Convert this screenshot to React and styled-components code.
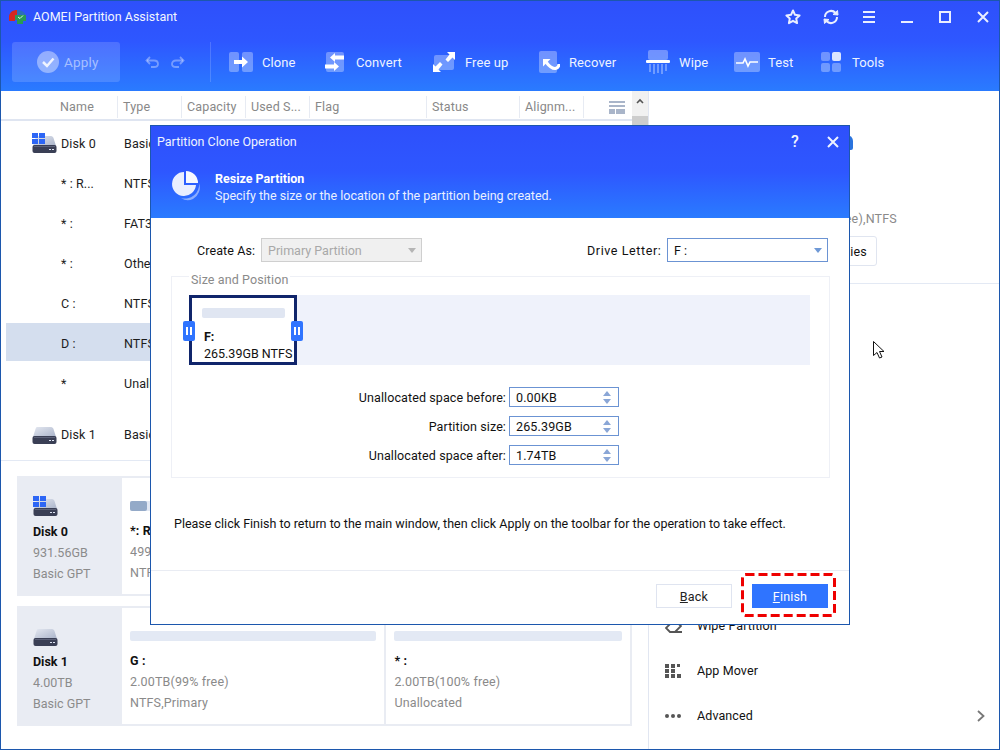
import React from "react";
import styled, { createGlobalStyle } from "styled-components";

const Global = createGlobalStyle`
  html, body { margin: 0; padding: 0; background: #fff; }
  * { box-sizing: border-box; }
  svg { display: block; flex: none; }
`;

const Win = styled.div`
  position: relative; width: 1000px; height: 750px; overflow: hidden;
  border: 1px solid #1c57ad; background: #fff; display: flex; flex-direction: column;
  font-family: Roboto, "Liberation Sans", sans-serif; font-size: 12.5px; color: #111;
`;
const Header = styled.header`
  height: 90px; flex: none; background: linear-gradient(180deg, #2e50fb 0%, #2e57ff 45%, #2a7bff 100%);
  color: #fff;
`;
const TitleBar = styled.div`
  height: 31px; display: flex; align-items: center; padding: 0 7px;
`;
const AppTitle = styled.div`
  margin-left: 6px; font-size: 12.5px; color: #f2f5ff;
`;
const WinControls = styled.div`
  margin-left: auto; display: flex; gap: 20px;
`;
const Toolbar = styled.div`
  display: flex; align-items: center; height: 40px; margin-top: 10px; padding-left: 11px;
`;
const ApplyBtn = styled.div`
  width: 108px; height: 40px; border-radius: 3px; background: rgba(255,255,255,.15);
  display: flex; align-items: center; padding-left: 25px; gap: 5px;
  color: rgba(255,255,255,.52); font-size: 13.5px; letter-spacing: .2px;
`;
const History = styled.div`
  display: flex; gap: 12px; margin-left: 25px; width: 65px;
`;
const ToolSep = styled.div`
  width: 1px; height: 40px; background: rgba(255,255,255,.16); margin-right: 18px;
`;
const Tool = styled.div`
  width: ${p => p.$w}px; display: flex; align-items: center; flex: none;
  color: #eef3ff; font-size: 13px; letter-spacing: .1px;
`;
const ToolIcon = styled.div`
  width: ${p => p.$w}px; height: 24px; flex: none; display: flex; align-items: center;
`;

const Main = styled.div`flex: 1; display: flex; min-height: 0;`;
const Left = styled.section`
  width: 648px; flex: none; border-right: 1px solid #e1e6f1; display: flex; flex-direction: column;
`;
const TableArea = styled.div`
  height: 370px; flex: none; border-bottom: 1px solid #e3e9f4; display: flex;
`;
const Table = styled.div`flex: 1; min-width: 0;`;
const Scrollbar = styled.div`
  width: 16px; flex: none; background: #f4f4f4; display: flex; flex-direction: column; align-items: center;
`;
const ScrollUp = styled.div`
  height: 25px; width: 100%; display: flex; align-items: center; justify-content: center; padding-bottom: 6px; background: #f1f1f1;
`;
const ScrollThumb = styled.div`width: 100%; height: 120px; background: #cdcdcd;`;
const HeadRow = styled.div`
  height: 30px; padding-top: 4px; display: grid; grid-template-columns: 117px 64px 64px 64px 117px 93px 64px 1fr;
  align-items: center; border-bottom: 2px solid #dfe5f1; color: #888; font-size: 12.5px; letter-spacing: .15px;
`;
const HeadCell = styled.div`
  height: 22px; line-height: 22px; padding-left: ${p => p.$first ? 59 : 5}px; white-space: nowrap; overflow: hidden;
  border-right: 1px solid #e7ebf3;
`;
const ColumnsIcon = styled.div`padding-left: 25px; display: flex; align-items: center;`;
const Row = styled.div`
  height: 38px; padding-top: 2px; margin: ${p => p.$mt || 0}px 0 2px 5px; display: grid; grid-template-columns: 118px 1fr; align-items: center;
  background: ${p => p.$sel ? "#d4deee" : "transparent"}; letter-spacing: .1px; color: #1c1c1c;
`;
const NameCell = styled.div`
  display: flex; align-items: center; gap: 4px; padding-left: ${p => p.$disk ? 26 : 55}px;
`;
const Rows = styled.div`padding-top: 2px;`;

const Cards = styled.div`padding: 15px 0 0 16px; display: flex; flex-direction: column; gap: 10px;`;
const Card = styled.div`
  width: 615px; height: 120px; background: #e9ecf3; padding: 2px 2px 2px 0; display: flex;
`;
const CardDisk = styled.div`
  width: 105px; flex: none; padding: 18px 0 0 16px; color: #8b8b8b; line-height: 21px;
`;
const DiskName = styled.div`font-weight: 700; color: #111; margin-top: 5px;`;
const Part = styled.div`
  flex: ${p => p.$grow}; min-width: 0; background: #fff; padding: 23px 8px 0; margin-right: 2px; white-space: nowrap;
  line-height: 21px; color: #8a8a8a; letter-spacing: .15px; overflow: hidden;
  &:last-child { margin-right: 0; }
`;
const Bar = styled.div`height: 10px; background: #e3e9f4; border-radius: 2px; margin-bottom: 10px;`;
const BarFill = styled.div`height: 100%; background: #94aac8; border-radius: 2px;`;
const PartName = styled.div`font-weight: 700; color: #111; line-height: 20px;`;

const Right = styled.section`flex: 1; display: flex; flex-direction: column; min-width: 0;`;
const RightTop = styled.div`
  height: 193px; flex: none; border-bottom: 1px solid #e3e9f4; padding-top: 44px; display: flex; flex-direction: column;
`;
const BlueTab = styled.div`
  width: 30px; height: 15px; margin-left: 174px; border-radius: 10px 6px 2px 2px; background: #2a74de;
`;
const Info = styled.div`
  margin-top: 60px; padding-right: 102px; text-align: right; color: #8a8a8a; letter-spacing: .2px; line-height: 18px;
`;
const PropBtn = styled.div`
  width: 110px; height: 30px; margin: 8px 0 0 118px; border: 1px solid #e0e5f0; border-radius: 3px;
  display: flex; align-items: center; justify-content: flex-end; padding-right: 9px; letter-spacing: .2px;
`;
const Ops = styled.div`margin-top: auto; padding: 0 0 11px 16px; display: flex; flex-direction: column;`;
const Op = styled.div`
  height: 45px; display: flex; align-items: center; gap: 15px; letter-spacing: .1px;
`;
const OpIcon = styled.div`width: 17px; height: 17px; flex: none; display: flex; align-items: center;`;
const Chevron = styled.div`margin-left: auto; margin-right: 14px; display: flex;`;

const Cursor = styled.svg`position: absolute; left: 871px; top: 339px;`;

const Dialog = styled.div`
  position: absolute; left: 149px; top: 124px; width: 700px; height: 500px; background: #fff;
  border: 1px solid #1c57ad; display: flex; flex-direction: column; font-size: 12.5px;
`;
const DlgHead = styled.div`
  height: 92px; flex: none; color: #fff; background: linear-gradient(180deg, #2e50fb 0%, #2e57ff 50%, #2a7bff 100%);
`;
const DlgTitleBar = styled.div`
  height: 31px; display: flex; align-items: center; padding: 0 10px 0 6px; color: #eef3ff;
`;
const DlgBtns = styled.div`margin-left: auto; display: flex; align-items: center; gap: 24px;`;
const Help = styled.span`font-size: 16px; font-weight: 500; width: 16px; text-align: center; color: #f1f4ff;`;
const Banner = styled.div`
  display: flex; align-items: flex-start; padding: 12px 0 0 20px; gap: 13px;
`;
const BannerIcon = styled.svg`margin-top: 2px;`;
const BannerText = styled.div`line-height: 17px; padding-top: 1px; color: #eaf0ff;`;
const BannerTitle = styled.div`font-weight: 700; color: #fff;`;

const TopFields = styled.div`
  display: flex; justify-content: space-between; align-items: center; padding: 20px 21px 0 46px; height: 44px;
`;
const FieldGroup = styled.div`display: flex; align-items: center; gap: 6px;`;
const FieldLabel = styled.div`
  width: ${p => p.$w}px; text-align: right; white-space: nowrap; letter-spacing: ${p => p.$ls || .1}px;
`;
const Select = styled.div`
  width: ${p => p.$w}px; height: 24px; display: flex; align-items: center; padding: 0 5px 0 6px;
  border: 1px solid ${p => p.$disabled ? "#cfcfcf" : "#6b93d3"};
  background: ${p => p.$disabled ? "#f0f0f0" : "#fff"};
  color: ${p => p.$disabled ? "#a8a8a8" : "#111"};
`;
const Caret = styled.div`
  margin-left: auto; width: 0; height: 0; border-left: 4.500px solid transparent; border-right: 4.500px solid transparent;
  border-top: 5px solid ${p => p.$disabled ? "#b5b5b5" : "#6f99d6"};
`;
const Group = styled.div`
  position: relative; height: 202px; margin: 14px 19px 0 20px; border: 1px solid #eef0f6; padding: 18px 19px 0 17px;
`;
const Legend = styled.div`
  position: absolute; left: 17px; top: -4px; padding: 0 2px; background: #fff; color: #8a8a8a; line-height: 14px; letter-spacing: .1px;
`;
const Track = styled.div`height: 70px; background: #eff2fb;`;
const PartBox = styled.div`
  position: relative; width: 108px; height: 70px; background: #fff; border: 3px solid #10256b; padding: 10px 0 0 12px;
  white-space: nowrap; line-height: 17px;
`;
const InnerBar = styled.div`height: 10px; background: #e0e6f2; border-radius: 2px; margin: 0 0 10px -2px; width: 83px;`;
const BoxName = styled.div`font-weight: 700;`;
const Handle = styled.div`
  position: absolute; top: 23px; ${p => p.$side}: -9px; width: 12px; height: 20px; border-radius: 2px; background: #2f74ff;
  display: flex; align-items: center; justify-content: center; gap: 2px;
  &::before, &::after { content: ""; width: 2px; height: 8px; background: #fff; }
`;
const Sizes = styled.div`
  margin-top: 22px; display: grid; grid-template-columns: 317px 110px; column-gap: 3px; row-gap: 9px; align-items: center;
`;
const SizeLabel = styled.div`text-align: right; letter-spacing: .1px;`;
const Spin = styled.div`
  height: 20px; border: 1px solid #6b93d3; display: flex; align-items: center; padding: 0 6px; letter-spacing: .15px;
`;
const SpinArrows = styled.div`margin-left: auto; margin-right: 1px; display: flex; flex-direction: column; gap: 3px;`;
const SpinUp = styled.div`
  width: 0; height: 0; border-left: 4px solid transparent; border-right: 4px solid transparent; border-bottom: 5px solid #8aa6d6;
`;
const SpinDown = styled(SpinUp)`border-bottom: 0; border-top: 5px solid #8aa6d6;`;
const Note = styled.div`margin: 38px 0 0 23px; line-height: 16px;`;
const Footer = styled.div`
  margin-top: auto; height: 54px; flex: none; border-top: 1px solid #e9ecf3; display: flex; justify-content: flex-end;
  gap: 20px; padding: 13px 21px 0 0;
`;
const Btn = styled.div`
  position: relative; width: 76px; height: 24px; display: flex; align-items: center; justify-content: center; letter-spacing: .2px;
  border: 1px solid ${p => p.$primary ? "#2f74ff" : "#dfe4f0"};
  background: ${p => p.$primary ? "#2f74ff" : "#fff"}; color: ${p => p.$primary ? "#fff" : "#222"};
`;
const Dash = styled.svg`position: absolute; left: -12px; top: -12px;`;
const Ul = styled.span`text-decoration: underline;`;

const WinIco = ({ children, w = 18, h = 18, vb = "0 0 18 18" }) => (
  <svg width={w} height={h} viewBox={vb} fill="none" stroke="#e9eeff" strokeWidth="2">{children}</svg>
);

const Logo = () => (
  <svg width="19" height="16" viewBox="0 0 19 16">
    <path d="M1 7 C2 3 5 1 9 1 L9 7 L7 8 L7 12 L1 12Z" fill="#d5281f" />
    <path d="M9 1 C13 1 17 3 18 7 L12 7 L9 5Z" fill="#2a6fb8" />
    <path d="M7 6 L18 6 L18 12 L15 12 L15 15 L9 15 L9 11 L7 11Z" fill="#2a9a55" />
    <path d="M10 8 L12 9.500 L15 6.500" stroke="#d9ffe6" strokeWidth="1" fill="none" />
  </svg>
);

const DiskIcon = ({ win }) => (
  <svg width="25" height="20" viewBox="0 0 25 20">
    <defs>
      <linearGradient id="dg" x1="0" y1="0" x2="1" y2="1">
        <stop offset="0" stopColor="#e4e8f1" />
        <stop offset="1" stopColor="#a9b3c9" />
      </linearGradient>
    </defs>
    <path d="M5 3 C5 3 6 3 7 3 L19 3 C20.500 3 21 4 21.500 5 L24 13 L1 13 L3.500 5 C4 4 4 3 5 3Z" fill="url(#dg)" />
    <rect x="0.500" y="12" width="24" height="8" rx="2" fill="#3a3f55" />
    <rect x="2" y="13" width="21" height="1" fill="#5b6178" />
    <rect x="17" y="16" width="2" height="1" fill="#dfe6f5" />
    <rect x="20" y="16" width="2" height="1" fill="#dfe6f5" />
    {win && (
      <g fill="#2d66f5">
        <rect x="0" y="0" width="6" height="5" />
        <rect x="7" y="0" width="6" height="5" />
        <rect x="0" y="6" width="6" height="5" />
        <rect x="7" y="6" width="6" height="5" />
      </g>
    )}
  </svg>
);

const W = "#fff";
const T = "rgba(255,255,255,.32)";

const tools = [
  { name: "Clone", w: 96, iw: 33, icon: (
    <svg width="24" height="20" viewBox="0 0 24 20">
      <rect x="0" y="0" width="10" height="20" rx="2" fill={T} />
      <rect x="13" y="0" width="11" height="20" rx="2" fill={T} />
      <path d="M5 8 H13 V4.500 L19 10 L13 15.500 V12 H5Z" fill={W} />
    </svg>) },
  { name: "Convert", w: 108, iw: 31, icon: (
    <svg width="20" height="22" viewBox="0 0 20 22">
      <rect x="1" y="1" width="18" height="20" rx="2" fill={T} />
      <path d="M19 4.500 H10 V2 L5 6.500 L10 11 V8.500 H19Z" fill={W} />
      <path d="M0 13.500 H9 V11 L14 15.500 L9 20 V17.500 H0Z" fill={W} />
    </svg>) },
  { name: "Free up", w: 106, iw: 32, icon: (
    <svg width="22" height="20" viewBox="0 0 22 20">
      <rect x="1" y="3" width="20" height="15" rx="2" fill={T} />
      <path d="M22 0 V8 L19.500 5.500 L15 10 L12.500 7.500 L16.500 2.500 L14 0Z" fill={W} />
      <path d="M0 20 V12 L2.500 14.500 L7 10 L9.500 12.500 L5.500 17.500 L8 20Z" fill={W} />
    </svg>) },
  { name: "Recover", w: 107, iw: 30, icon: (
    <svg width="21" height="22" viewBox="0 0 21 22">
      <rect x="0" y="0" width="18" height="22" rx="2" fill={T} />
      <path d="M4 8 H11.500 L4 15.500Z" fill={W} />
      <path d="M7 11 C10 15 13 18 16.500 17.500 C18.500 17 20 15.500 20 13" stroke={W} strokeWidth="3" fill="none" />
    </svg>) },
  { name: "Wipe", w: 88, iw: 33, icon: (
    <svg width="24" height="24" viewBox="0 0 24 24">
      <rect x="2" y="0" width="20" height="10" rx="2" fill={T} />
      <rect x="0" y="10" width="24" height="3" rx="1" fill={W} />
      <g fill={T}>
        <rect x="3" y="14" width="2" height="8" /><rect x="7" y="14" width="2" height="10" /><rect x="11" y="14" width="2" height="9" /><rect x="15" y="14" width="2" height="10" /><rect x="19" y="14" width="2" height="7" />
      </g>
    </svg>) },
  { name: "Test", w: 87, iw: 34, icon: (
    <svg width="26" height="20" viewBox="0 0 26 20">
      <rect x="0" y="0" width="26" height="20" rx="2" fill={T} />
      <path d="M2 11 H9 L11 7 L14 14 L16 10 H24" stroke={W} strokeWidth="1.600" fill="none" />
    </svg>) },
  { name: "Tools", w: 90, iw: 31, icon: (
    <svg width="20" height="20" viewBox="0 0 20 20">
      <rect x="0" y="0" width="9" height="9" rx="2" fill={T} />
      <rect x="11" y="0" width="9" height="9" rx="2" fill="#dbe5ff" />
      <rect x="0" y="11" width="9" height="9" rx="2" fill={T} />
      <rect x="11" y="11" width="9" height="9" rx="2" fill={T} />
    </svg>) },
];

const diskRows = [
  { name: "Disk 0", type: "Basic GPT", win: true, disk: true },
  { name: "* : R...", type: "NTFS" },
  { name: "* :", type: "FAT32" },
  { name: "* :", type: "Other" },
  { name: "C :", type: "NTFS" },
  { name: "D :", type: "NTFS", sel: true },
  { name: "*", type: "Unallocated" },
  { name: "Disk 1", type: "Basic GPT", disk: true, mt: 13 },
];

const sizes = [
  ["Unallocated space before:", "0.00KB"],
  ["Partition size:", "265.39GB"],
  ["Unallocated space after:", "1.74TB"],
];

const heads = ["Name", "Type", "Capacity", "Used S...", "Flag", "Status", "Alignm..."];

export default function App() {
  return (
    <Win>
      <Global />
      <Header>
        <TitleBar>
          <Logo />
          <AppTitle>AOMEI Partition Assistant</AppTitle>
          <WinControls>
            <WinIco><path d="M9 2.500 L11 6.800 L15.600 7.400 L12.200 10.500 L13.100 15.100 L9 12.800 L4.900 15.100 L5.800 10.500 L2.400 7.400 L7 6.800Z" strokeLinejoin="round" /></WinIco>
            <WinIco>
              <path d="M3 9 A6 6 0 0 1 13.500 5" />
              <path d="M15 9 A6 6 0 0 1 4.500 13" />
              <path d="M11 6.500 L16 7 L15.500 2.500Z" fill="#e9eeff" strokeWidth="1" />
              <path d="M7 11.500 L2 11 L2.500 15.500Z" fill="#e9eeff" strokeWidth="1" />
            </WinIco>
            <WinIco><path d="M3 4 H15 M3 9 H15 M3 14 H15" /></WinIco>
            <WinIco><path d="M3 14 H15" /></WinIco>
            <WinIco><rect x="4" y="4" width="10" height="10" /></WinIco>
            <WinIco><path d="M4 4 L14 14 M14 4 L4 14" /></WinIco>
          </WinControls>
        </TitleBar>
        <Toolbar>
          <ApplyBtn>
            <svg width="22" height="22" viewBox="0 0 22 22">
              <circle cx="11" cy="11" r="11" fill="rgba(255,255,255,.4)" />
              <path d="M6 11 L10 15 L16.500 7.500" stroke="#fff" strokeWidth="2.500" fill="none" opacity=".85" />
            </svg>
            Apply
          </ApplyBtn>
          <History>
            <svg width="14" height="12" viewBox="0 0 14 12" fill="none" stroke="rgba(255,255,255,.35)" strokeWidth="1.800">
              <path d="M5 1 L1.500 4.500 L5 8" /><path d="M2 4.500 H9 C11.500 4.500 13 6 13 8 C13 10 11.500 11 9 11 H6" />
            </svg>
            <svg width="14" height="12" viewBox="0 0 14 12" fill="none" stroke="rgba(255,255,255,.35)" strokeWidth="1.800">
              <path d="M9 1 L12.500 4.500 L9 8" /><path d="M12 4.500 H5 C2.500 4.500 1 6 1 8 C1 10 2.500 11 5 11 H8" />
            </svg>
          </History>
          <ToolSep />
          {tools.map(t => (
            <Tool key={t.name} $w={t.w}>
              <ToolIcon $w={t.iw}>{t.icon}</ToolIcon>
              {t.name}
            </Tool>
          ))}
        </Toolbar>
      </Header>
      <Main>
        <Left>
          <TableArea>
            <Table>
              <HeadRow>
                {heads.map((h, i) => <HeadCell key={h} $first={i === 0}>{h}</HeadCell>)}
                <ColumnsIcon>
                  <svg width="16" height="13" viewBox="0 0 16 13">
                    <g fill="#a9b5c9">
                      <rect x="0" y="0" width="16" height="2" />
                      <rect x="0" y="4" width="16" height="2" />
                      <rect x="0" y="8" width="6" height="5" />
                      <rect x="7" y="8" width="9" height="5" />
                    </g>
                  </svg>
                </ColumnsIcon>
              </HeadRow>
              <Rows>
                {diskRows.map((r, i) => (
                  <Row key={i} $sel={r.sel} $mt={r.mt}>
                    <NameCell $disk={r.disk}>{r.disk && <DiskIcon win={r.win} />}{r.name}</NameCell>
                    <div>{r.type}</div>
                  </Row>
                ))}
              </Rows>
            </Table>
            <Scrollbar>
              <ScrollUp>
                <svg width="8" height="6" viewBox="0 0 8 6"><path d="M1 5 L4 2 L7 5" stroke="#555" strokeWidth="1.600" fill="none" /></svg>
              </ScrollUp>
              <ScrollThumb />
            </Scrollbar>
          </TableArea>
          <Cards>
            <Card>
              <CardDisk>
                <DiskIcon win />
                <DiskName>Disk 0</DiskName>
                <div>931.56GB</div>
                <div>Basic GPT</div>
              </CardDisk>
              <Part $grow={1}>
                <Bar><BarFill style={{ width: "17px" }} /></Bar>
                <PartName>*: R</PartName>
                <div>499.00MB</div>
                <div>NTFS,Primary</div>
              </Part>
            </Card>
            <Card>
              <CardDisk>
                <DiskIcon />
                <DiskName>Disk 1</DiskName>
                <div>4.00TB</div>
                <div>Basic GPT</div>
              </CardDisk>
              <Part $grow={263}>
                <Bar />
                <PartName>G :</PartName>
                <div>2.00TB(99% free)</div>
                <div>NTFS,Primary</div>
              </Part>
              <Part $grow={243}>
                <Bar />
                <PartName>* :</PartName>
                <div>2.00TB(100% free)</div>
                <div>Unallocated</div>
              </Part>
            </Card>
          </Cards>
        </Left>
        <Right>
          <RightTop>
            <BlueTab />
            <Info>465.76GB(52% free),NTFS</Info>
            <PropBtn>Properties</PropBtn>
          </RightTop>
          <Ops>
            <Op>
              <OpIcon>
                <svg width="17" height="14" viewBox="0 0 17 14" fill="none" stroke="#555" strokeWidth="1.800"><path d="M5 13 L1 9 L9 1 L16 7 L10 13 Z M5 13 H17" /></svg>
              </OpIcon>
              Wipe Partition
            </Op>
            <Op>
              <OpIcon>
                <svg width="16" height="14" viewBox="0 0 16 14" fill="#555">
                  <rect x="0" y="0" width="4" height="4" /><rect x="6" y="0" width="4" height="4" /><rect x="12" y="0" width="3" height="3" />
                  <rect x="0" y="5" width="4" height="4" /><rect x="6" y="5" width="4" height="4" />
                  <rect x="0" y="10" width="4" height="4" /><rect x="6" y="10" width="4" height="4" /><rect x="12" y="10" width="4" height="4" />
                </svg>
              </OpIcon>
              App Mover
            </Op>
            <Op>
              <OpIcon>
                <svg width="16" height="4" viewBox="0 0 16 4" fill="#555"><circle cx="2" cy="2" r="2" /><circle cx="8" cy="2" r="2" /><circle cx="14" cy="2" r="2" /></svg>
              </OpIcon>
              Advanced
              <Chevron>
                <svg width="8" height="12" viewBox="0 0 8 12"><path d="M1 1 L6.500 6 L1 11" stroke="#777" strokeWidth="1.800" fill="none" /></svg>
              </Chevron>
            </Op>
          </Ops>
        </Right>
      </Main>

      <Cursor width="14" height="20" viewBox="0 0 14 20">
        <path d="M1.500 1.500 V15.500 L5 12.500 L7.500 18 L10 17 L7.500 11.500 L12 11.500Z" fill="#fff" stroke="#111" strokeWidth="1" />
      </Cursor>

      <Dialog>
        <DlgHead>
          <DlgTitleBar>
            Partition Clone Operation
            <DlgBtns>
              <Help>?</Help>
              <svg width="12" height="12" viewBox="0 0 12 12"><path d="M1 1 L11 11 M11 1 L1 11" stroke="#eef3ff" strokeWidth="2" /></svg>
            </DlgBtns>
          </DlgTitleBar>
          <Banner>
            <BannerIcon width="31" height="30" viewBox="0 0 31 30">
              <path d="M28 12 A13 13 0 0 1 22 28 A12 12 0 0 1 10 27 A14 14 0 0 0 28 12Z" fill="rgba(255,255,255,.45)" />
              <path d="M13 1 A12 12 0 1 0 25 14 H13Z" fill="#e9eeff" />
              <path d="M15 0 A12 12 0 0 1 27 12 H15Z" fill="#f6f8ff" />
            </BannerIcon>
            <BannerText>
              <BannerTitle>Resize Partition</BannerTitle>
              <div>Specify the size or the location of the partition being created.</div>
            </BannerText>
          </Banner>
        </DlgHead>
        <TopFields>
          <FieldGroup>
            <FieldLabel $w={58}>Create As:</FieldLabel>
            <Select $w={161} $disabled>Primary Partition<Caret $disabled /></Select>
          </FieldGroup>
          <FieldGroup>
            <FieldLabel $w={74} $ls={.6}>Drive Letter:</FieldLabel>
            <Select $w={161}>F :<Caret /></Select>
          </FieldGroup>
        </TopFields>
        <Group>
          <Legend>Size and Position</Legend>
          <Track>
            <PartBox>
              <Handle $side="left" />
              <Handle $side="right" />
              <InnerBar />
              <BoxName>F:</BoxName>
              <div>265.39GB NTFS</div>
            </PartBox>
          </Track>
          <Sizes>
            {sizes.map(([label, value]) => (
              <React.Fragment key={label}>
                <SizeLabel>{label}</SizeLabel>
                <Spin>
                  {value}
                  <SpinArrows><SpinUp /><SpinDown /></SpinArrows>
                </Spin>
              </React.Fragment>
            ))}
          </Sizes>
        </Group>
        <Note>Please click Finish to return to the main window, then click Apply on the toolbar for the operation to take effect.</Note>
        <Footer>
          <Btn><Ul>B</Ul>ack</Btn>
          <Btn $primary>
            <Ul>F</Ul>inish
            <Dash width="95" height="44" viewBox="0 0 95 44">
              <rect x="1.500" y="1.500" width="92" height="41" rx="3" fill="none" stroke="#ee0000" strokeWidth="3" strokeDasharray="9 4" />
            </Dash>
          </Btn>
        </Footer>
      </Dialog>
    </Win>
  );
}
